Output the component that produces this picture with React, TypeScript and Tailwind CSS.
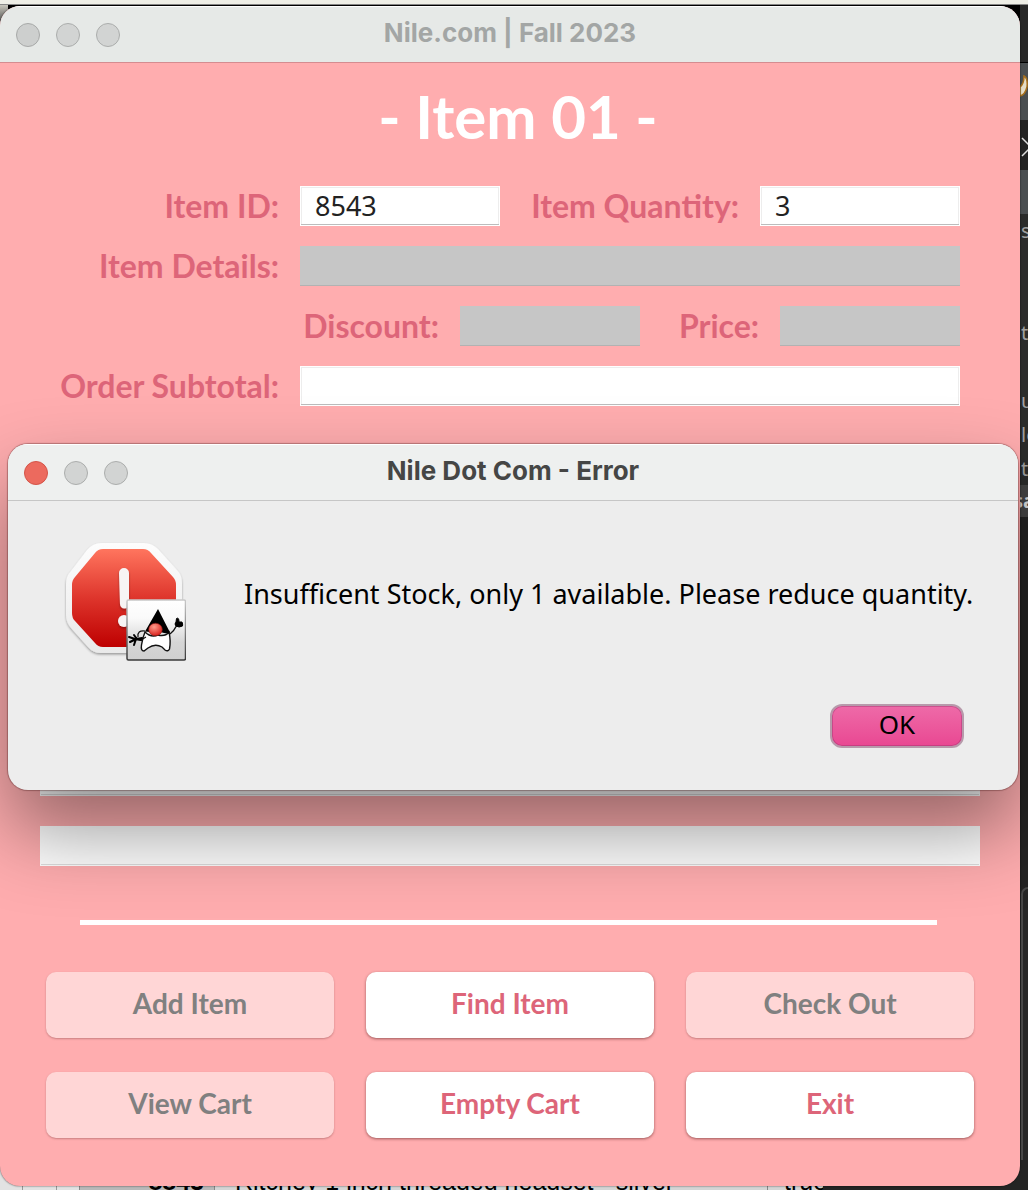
import type { ReactNode } from "react";

function Lights({ active = false }: { active?: boolean }) {
  return (
    <div className="flex w-[104px] shrink-0 gap-4">
      <button
        type="button"
        aria-label="Close"
        className={
          active
            ? "size-6 rounded-full border border-[#d35448] bg-[#ec6a5e]"
            : "size-6 rounded-full border border-[#a7a9a8] bg-[#cdcfce]"
        }
      />
      <button type="button" aria-label="Minimize" className="size-6 rounded-full border border-[#abadac] bg-[#d2d4d3]" />
      <button type="button" aria-label="Zoom" className="size-6 rounded-full border border-[#abadac] bg-[#d2d4d3]" />
    </div>
  );
}

function Field({
  id,
  label,
  labelClass,
  value = "",
  disabled = false,
}: {
  id: string;
  label: string;
  labelClass: string;
  value?: string;
  disabled?: boolean;
}) {
  return (
    <>
      <label
        htmlFor={id}
        className={`${labelClass} shrink-0 pr-[21px] text-right font-['Lato',sans-serif] text-[32px] leading-10 font-bold whitespace-nowrap text-[#dd6579]`}
      >
        {label}
      </label>
      <input
        id={id}
        type="text"
        defaultValue={value}
        disabled={disabled}
        className={
          disabled
            ? "h-10 w-0 min-w-0 flex-1 border-b border-[#b2b2b2] bg-[#c6c6c6] px-4"
            : "h-10 w-0 min-w-0 flex-1 border border-white bg-white px-[14px] font-['Noto_Sans',sans-serif] text-[27px] text-[#222] shadow-[inset_0_-1px_0_#bcbcbc,inset_0_0_0_1px_#ededed] outline-none"
        }
      />
    </>
  );
}

function Action({ children, disabled = false }: { children: ReactNode; disabled?: boolean }) {
  return (
    <button
      type="button"
      disabled={disabled}
      className={
        disabled
          ? "h-[66px] rounded-[10px] bg-[#ffd6d6] pb-1 font-['Lato',sans-serif] text-[28px] font-bold text-[#808080] shadow-[0_1px_2px_rgba(120,60,60,0.4)]"
          : "h-[66px] rounded-[10px] bg-white pb-1 font-['Lato',sans-serif] text-[28px] font-bold text-[#dd6579] shadow-[0_1px_3px_rgba(90,30,30,0.6)]"
      }
    >
      {children}
    </button>
  );
}

function ErrorIcon() {
  return (
    <svg width="126" height="126" viewBox="0 0 126 126" className="shrink-0" role="img" aria-label="Error">
      <defs>
        <linearGradient id="red" x1="0" y1="0" x2="0" y2="1">
          <stop offset="0" stopColor="#ff755e" />
          <stop offset="0.5" stopColor="#de352c" />
          <stop offset="1" stopColor="#be0000" />
        </linearGradient>
        <linearGradient id="rim" x1="0" y1="0" x2="0" y2="1">
          <stop offset="0" stopColor="#fdfdfd" />
          <stop offset="1" stopColor="#e9e9e9" />
        </linearGradient>
        <linearGradient id="tile" x1="0" y1="0" x2="0" y2="1">
          <stop offset="0" stopColor="#fff" />
          <stop offset="0.3" stopColor="#fafafa" />
          <stop offset="0.7" stopColor="#d6d6d6" />
          <stop offset="1" stopColor="#d0d0d0" />
        </linearGradient>
        <linearGradient id="edge" x1="0" y1="0" x2="0" y2="1">
          <stop offset="0" stopColor="#c9c9c9" />
          <stop offset="1" stopColor="#3a3a3a" />
        </linearGradient>
        <radialGradient id="nose" cx="0.4" cy="0.3" r="0.7">
          <stop offset="0" stopColor="#ff9c8c" />
          <stop offset="1" stopColor="#d8201c" />
        </radialGradient>
        <filter id="soft" x="-10%" y="-10%" width="120%" height="125%">
          <feDropShadow dx="0" dy="1.5" stdDeviation="1.3" floodOpacity="0.35" />
        </filter>
      </defs>
      <path
        filter="url(#soft)"
        fill="url(#rim)"
        d="M41 3H84Q92 3 98 9L117 30Q122 35 122 43V71Q122 79 117 84L98 106Q92 113 84 113H41Q33 113 28 107L11 88Q6 82 6 75V44Q6 36 11 31L27 10Q33 3 41 3Z"
      />
      <path
        fill="url(#red)"
        d="M43 9H83Q88 9 91 13L113 37Q116 40 116 45V74Q116 79 113 82L93 103Q89 107 84 107H43Q38 107 35 103L15 81Q12 78 12 73V45Q12 40 15 37L35 13Q38 9 43 9Z"
      />
      <g fill="#f7f4f4" filter="url(#soft)">
        <path d="M59 33a5 5 0 0 1 10 0V64a4.500 4.500 0 0 1-9 0Z" />
        <circle cx="64" cy="81" r="6" />
      </g>
      <rect x="67" y="60" width="58.500" height="60" rx="1.500" fill="url(#tile)" stroke="url(#edge)" strokeWidth="1.500" />
      <path
        d="M85 92Q91 98 98 95Q105 97 109 92Q111 101 109.500 109Q108 112 105 110L102 107Q95 103 88 108L84 111Q80.500 111 81.500 105Q82.500 98 85 92Z"
        fill="#fff"
        stroke="#111"
        strokeWidth="1.400"
      />
      <path d="M85 91.500L98 69L110 92.500Q104 94 101 92L90 92Z" fill="#000" />
      <ellipse cx="95.500" cy="89.500" rx="6.800" ry="6.300" fill="url(#nose)" stroke="#8d1512" strokeWidth="0.600" />
      <path d="M85 91Q77 90 78 97M86 97L81 100L76 99" fill="none" stroke="#111" strokeWidth="1.200" />
      <path d="M110 94Q114 91 117 85" fill="none" stroke="#111" strokeWidth="1.400" />
      <path
        d="M81 100L75 99L69 97M76 99L70 102M76 99L74 105M77 99L74 95M76 99L82 98"
        fill="none"
        stroke="#000"
        strokeWidth="2"
        strokeLinecap="round"
      />
      <path d="M116.500 78.500Q119 77 119 82L122 82Q123 84 122.500 86Q119 88 116 86Q114 84 116 82Z" fill="#000" stroke="#000" strokeWidth="1" />
    </svg>
  );
}

function Backdrop() {
  const side = "pl-px font-['Noto_Sans',sans-serif] text-[20px] leading-[34px] text-[#a0a0a0]";
  return (
    <div aria-hidden="true" className="absolute inset-0 flex flex-col overflow-hidden bg-[#242424]">
      <div className="h-[5px] shrink-0 border-b border-[#888] bg-[#eeeee6]" />
      <div className="flex min-h-0 flex-1">
        <div className="h-5 w-2 bg-linear-to-b from-[#c8c6bc] to-[#444]" />
        <div className="flex-1 bg-black" />
        <div className="flex w-2 shrink-0 flex-col overflow-hidden">
          <div className="h-[58px] shrink-0 border-b border-black bg-[#282828]" />
          <div className="h-[57px] shrink-0 overflow-hidden bg-[#4a4e50] pt-3">
            <svg width="8" height="24" viewBox="0 0 8 24">
              <path d="M0 12Q4 9 4 1Q8 3 7 12Q5 20 0 21Z" fill="#e4ddc8" stroke="#a8701c" strokeWidth="1.500" />
            </svg>
          </div>
          <div className="h-[50px] shrink-0 bg-[#222] pt-[17px]">
            <svg width="8" height="20" viewBox="0 0 8 20">
              <path d="M2 1L11 10L2 19" fill="none" stroke="#ddd" strokeWidth="1.500" />
            </svg>
          </div>
          <div className="h-11 shrink-0 bg-[#4a4e50]" />
          <div className="h-[271px] shrink-0 bg-[#2b2c2b]">
            <div className={side}>s</div>
            <div className="h-[68px]" />
            <div className={side}>to</div>
            <div className="h-[34px]" />
            <div className={side}>u</div>
            <div className={side}>lo</div>
            <div className={side}>t</div>
          </div>
          <div className="flex h-8 shrink-0 justify-center bg-[#454545] font-['Noto_Sans',sans-serif] text-[20px] leading-8 font-bold text-[#ddd]">
            sa
          </div>
          <div className="h-[370px] shrink-0 bg-[#232323]" />
          <div className="ml-px flex-1 rounded-tl-xl border-t-2 border-l-2 border-[#484848] bg-[#262626]" />
        </div>
      </div>
      <div className="flex h-[30px] shrink-0 overflow-hidden bg-[#242424] font-['Liberation_Sans',sans-serif] text-[25px] leading-[42px] whitespace-nowrap text-black">
        <div className="w-[22px] shrink-0 bg-[#e2e2e2]" />
        <div className="w-[35px] shrink-0 border-x border-[#999] bg-[#e2e2e2] text-center text-[16px]">17</div>
        <div className="w-[22px] shrink-0 bg-[#e2e2e2]" />
        <div className="w-[136px] shrink-0 border-x border-[#888] bg-[#b8b8b8] pr-2.5 text-right font-bold">8843</div>
        <div className="w-[552px] shrink-0 bg-[#d4d4d4] pl-5">Ritchey 1 inch threaded headset - silver</div>
        <div className="w-14 shrink-0 overflow-hidden border-l border-[#888] bg-[#d4d4d4] pl-4">true</div>
      </div>
    </div>
  );
}

function ErrorDialog() {
  return (
    <section
      role="dialog"
      aria-labelledby="dialog-title"
      className="absolute top-[444px] right-[10px] left-2 overflow-hidden rounded-[20px] bg-[#ededed] shadow-[0_0_1px_1px_rgba(70,20,20,0.35),0_40px_80px_rgba(0,0,0,0.42)]"
    >
      <header className="flex h-[57px] items-center border-t border-b border-t-white border-b-[#c6c6c6] bg-[#eef0ef] px-4">
        <Lights active />
        <h2
          id="dialog-title"
          className="flex-1 pr-[104px] pb-1 text-center font-['Inter',sans-serif] text-[26px] leading-8 font-bold text-[#454645]"
        >
          Nile Dot Com - Error
        </h2>
      </header>
      <div className="flex items-start pt-[39px] pl-[52px]">
        <ErrorIcon />
        <p className="pt-9 pl-[58px] font-['Noto_Sans',sans-serif] text-[27px] leading-9 whitespace-nowrap text-black">
          Insufficent Stock, only 1 available. Please reduce quantity.
        </p>
      </div>
      <div className="flex justify-end pt-[38px] pr-[54px] pb-[42px]">
        <button
          type="button"
          className="h-11 w-[134px] rounded-xl border-2 border-[#b79aab] bg-linear-to-b from-[#ee6aa8] to-[#e94792] pb-1 font-['Noto_Sans',sans-serif] text-[26px] leading-9 text-black shadow-[inset_0_0_0_1px_rgba(160,50,110,0.45)]"
        >
          OK
        </button>
      </div>
    </section>
  );
}

const cartLines = [1, 2, 3, 4, 5, 6];

export default function App() {
  return (
    <div className="relative min-h-screen overflow-hidden">
      <Backdrop />
      <main className="relative mt-1.5 mr-2 mb-1 overflow-hidden rounded-[20px] bg-[#ffadaf] shadow-[0_0_2px_rgba(0,0,0,0.7)]">
        <header className="flex h-[57px] items-center border-t border-b border-t-white border-b-[#d58c90] bg-[#e6e9e7] px-4">
          <Lights />
          <div className="flex-1 pr-[104px] pb-1 text-center font-['Inter',sans-serif] text-[26px] leading-8 font-bold text-[#a3a6a5]">
            Nile.com | Fall 2023
          </div>
        </header>

        <h1 className="pt-[18px] pb-0.5 pl-4 text-center font-['Lato',sans-serif] text-[60px] leading-[70px] font-bold text-white">
          - Item 01 -
        </h1>

        <form className="flex flex-col gap-5 pt-[33px] pr-[60px]">
          <div className="flex">
            <Field id="item-id" label="Item ID:" labelClass="w-[300px]" value="8543" />
            <Field id="quantity" label="Item Quantity:" labelClass="w-[260px]" value="3" />
          </div>
          <div className="flex">
            <Field id="details" label="Item Details:" labelClass="w-[300px]" disabled />
          </div>
          <div className="flex">
            <Field id="discount" label="Discount:" labelClass="w-[460px]" disabled />
            <Field id="price" label="Price:" labelClass="w-[140px]" disabled />
          </div>
          <div className="flex">
            <Field id="subtotal" label="Order Subtotal:" labelClass="w-[300px]" />
          </div>
        </form>

        <div className="flex flex-col gap-[30px] px-10 pt-[70px]">
          {cartLines.map((n) => (
            <input
              key={n}
              type="text"
              aria-label={`Cart line ${n}`}
              className="h-10 w-full border border-white bg-white shadow-[inset_0_-1px_0_#dedede]"
            />
          ))}
        </div>

        <hr className="mt-[54px] mr-[83px] ml-20 border-0 border-t-[5px] border-white" />

        <div className="grid grid-cols-3 gap-x-8 gap-y-[34px] px-[46px] pt-[47px] pb-12">
          <Action disabled>Add Item</Action>
          <Action>Find Item</Action>
          <Action disabled>Check Out</Action>
          <Action disabled>View Cart</Action>
          <Action>Empty Cart</Action>
          <Action>Exit</Action>
        </div>
      </main>
      <ErrorDialog />
    </div>
  );
}
